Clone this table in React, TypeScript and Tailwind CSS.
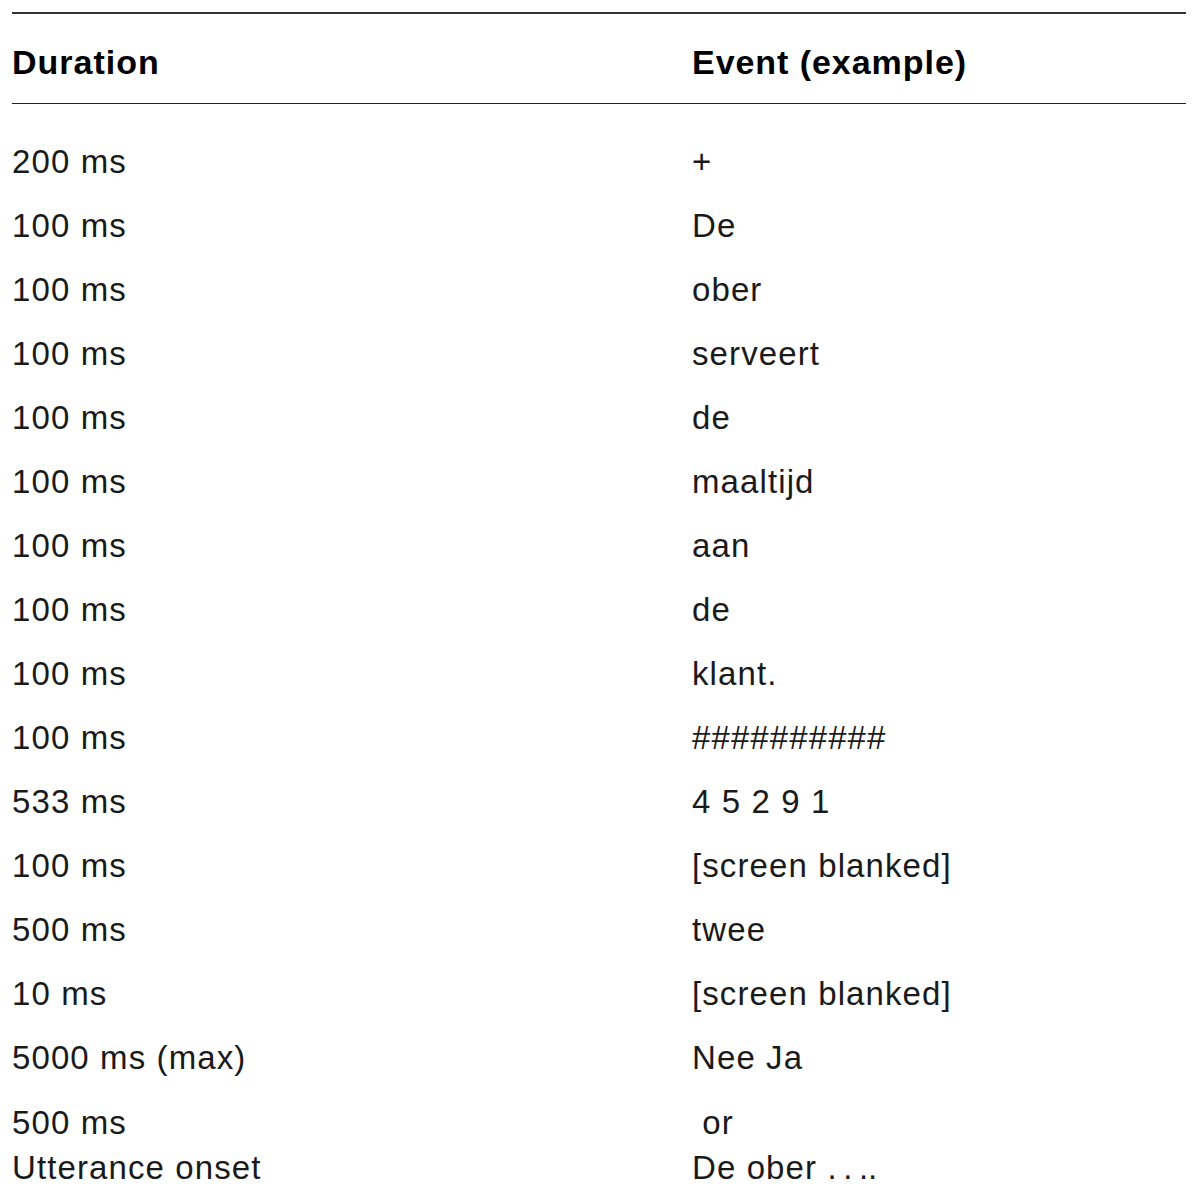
import React from "react";

const rows: [string, string][] = [
  ["200 ms", "+"],
  ["100 ms", "De"],
  ["100 ms", "ober"],
  ["100 ms", "serveert"],
  ["100 ms", "de"],
  ["100 ms", "maaltijd"],
  ["100 ms", "aan"],
  ["100 ms", "de"],
  ["100 ms", "klant."],
  ["100 ms", "##########"],
  ["533 ms", "4 5 2 9 1"],
  ["100 ms", "[screen blanked]"],
  ["500 ms", "twee"],
  ["10 ms", "[screen blanked]"],
  ["5000 ms (max)", "Nee Ja"],
];

export default function App() {
  return (
    <div
      className="w-[1200px] h-[1193px] bg-white text-[#1a1a1a] overflow-hidden"
      style={{ fontFamily: '"Liberation Sans", Arial, sans-serif' }}
    >
      <div className="ml-[12px] w-[1174px] mt-[12px] border-t-2 border-[#333]">
        <div className="grid grid-cols-[680px_1fr] h-[90px] items-center border-b-[1.5px] border-[#222]">
          <div className="font-bold text-[34px] leading-none pt-[6px] tracking-[1px] text-[#000]">Duration</div>
          <div className="font-bold text-[34px] leading-none pt-[6px] tracking-[0.95px] text-[#000]">Event (example)</div>
        </div>
        <div className="pt-[26px] text-[33px] leading-[64px] tracking-[1.1px]">
          {rows.map(([d, e], i) => (
            <div key={i} className="grid grid-cols-[680px_1fr]">
              <div>{d}</div>
              <div>{e}</div>
            </div>
          ))}
          <div className="grid grid-cols-[680px_1fr] pt-[10px] leading-[45px]">
            <div>
              <div>500 ms</div>
              <div>Utterance onset</div>
            </div>
            <div>
              <div>&nbsp;or</div>
              <div>
                De ober <span className="tracking-normal">{".\u2009.\u2009.."}</span>
              </div>
            </div>
          </div>
        </div>
      </div>
    </div>
  );
}
